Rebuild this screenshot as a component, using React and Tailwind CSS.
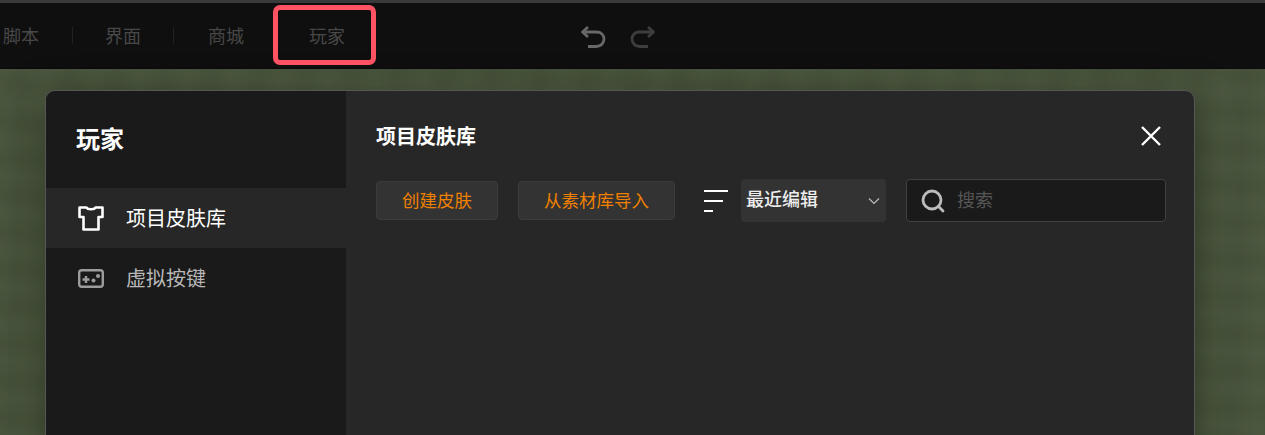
import React from "react";

const font = { fontFamily: '"Noto Sans CJK SC", "Liberation Sans", sans-serif' };

function Shirt() {
  return (
    <svg width="26" height="25" viewBox="0 0 26 25" fill="none" stroke="#ffffff" strokeWidth="2.6" strokeLinejoin="round" className="shrink-0">
      <path d="M1.5 1.5H8.5C9.5 3.8 16.5 3.8 17.5 1.5H24.5V11H20.5V23.5H5.5V11H1.5Z" />
    </svg>
  );
}

function Gamepad() {
  return (
    <svg width="26" height="19" viewBox="0 0 26 19" fill="none" className="shrink-0">
      <rect x="1.2" y="1.2" width="23.6" height="16.6" rx="2.5" stroke="#9c9c9c" strokeWidth="2.4" />
      <path d="M4.5 10.5H11.5M8 7V14" stroke="#9c9c9c" strokeWidth="2.4" />
      <circle cx="15.5" cy="11.5" r="2" fill="#9c9c9c" />
      <circle cx="20" cy="7" r="2" fill="#9c9c9c" />
    </svg>
  );
}

function Undo({ color, flip }) {
  return (
    <svg width="26" height="24" viewBox="0 0 26 24" fill="none" stroke={color} strokeWidth="2.8" className={flip ? "-scale-x-100" : ""}>
      <path d="M8 2L2.5 7L8 12" strokeLinejoin="round" />
      <path d="M3 7H16.5C21 7 24 10 24 14C24 18 21 21.5 16.5 21.5H8" />
    </svg>
  );
}

function NavItem({ label, selected }) {
  return (
    <div className="relative w-[102px] h-full flex items-center justify-center text-[18px] text-[#484848]">
      {label}
      {selected && (
        <div className="absolute -left-[3px] top-[2px] w-[103px] h-[60px] border-[5px] border-[#ff5364] rounded-[7px]" />
      )}
    </div>
  );
}

export default function App() {
  return (
    <div style={font} className="h-[435px] w-[1265px] overflow-hidden flex flex-col bg-[#46523a]">
      <div className="h-[3px] bg-[#3a3a3a] shrink-0" />
      <div className="h-[66px] shrink-0 bg-[#0f0f0f] border-b border-[#0a0a0a] flex items-center">
        <div className="flex items-center h-full -ml-[30px]">
          <NavItem label="脚本" />
          <div className="w-px h-[17px] bg-[#222222] -mr-px shrink-0" />
          <NavItem label="界面" />
          <div className="w-px h-[17px] bg-[#222222] -ml-px mr-px shrink-0" />
          <NavItem label="商城" />
          <div className="-ml-px h-full">
            <NavItem label="玩家" selected />
          </div>
        </div>
        <div className="flex items-center gap-[24px] ml-[202px] mt-[2px]">
          <Undo color="#686868" />
          <Undo color="#3e3e3e" flip />
        </div>
      </div>
      <div className="flex-1 min-h-0 pl-[45px] pr-[70px] pt-[21px] bg-[#47533b] bg-[repeating-linear-gradient(92deg,rgba(255,255,255,0.012)_0px,rgba(0,0,0,0.025)_22px,rgba(255,255,255,0.012)_47px),repeating-linear-gradient(3deg,rgba(255,255,255,0.014)_0px,rgba(0,0,0,0.02)_17px,rgba(255,255,255,0.014)_37px)]">
        <div className="h-[400px] rounded-[10px] border border-[#565656] overflow-hidden flex bg-[#272727] shadow-[0_12px_40px_rgba(25,35,15,0.55)]">
          <div className="w-[300px] shrink-0 bg-[#1a1a1a] flex flex-col">
            <div className="h-[97px] pl-[30px] pb-[4px] flex items-center text-[24px] font-bold text-white leading-none">玩家</div>
            <div className="h-[60px] bg-[#272727] pl-[32px] flex items-center gap-[22px] text-[20px] text-white">
              <Shirt />
              <span>项目皮肤库</span>
            </div>
            <div className="h-[60px] pl-[32px] flex items-center gap-[22px] text-[20px] text-[#b8b8b8]">
              <Gamepad />
              <span>虚拟按键</span>
            </div>
          </div>
          <div className="flex-1 min-w-0 pl-[30px] pr-[28px] pt-[30px]">
            <div className="flex items-center justify-between h-[30px]">
              <div className="text-[20px] font-bold text-white leading-none">项目皮肤库</div>
              <svg width="20" height="20" viewBox="0 0 20 20" stroke="#ffffff" strokeWidth="2.4" className="mr-[5px]">
                <path d="M1 1L19 19M19 1L1 19" />
              </svg>
            </div>
            <div className="flex items-center mt-[28px]">
              <button className="w-[122px] h-[39px] rounded-[4px] bg-[#333333] border border-[#3b3b3b] text-[17.5px] text-[#f08000] flex items-center justify-center">创建皮肤</button>
              <button className="w-[157px] h-[39px] ml-[20px] rounded-[4px] bg-[#333333] border border-[#3b3b3b] text-[17.5px] text-[#f08000] flex items-center justify-center">从素材库导入</button>
              <div className="ml-[29px] w-[24px] flex flex-col gap-[8px]">
                <div className="h-[2px] w-[24px] bg-white" />
                <div className="h-[2px] w-[19px] bg-white" />
                <div className="h-[2px] w-[9px] bg-white" />
              </div>
              <div className="ml-[13px] w-[145px] h-[43px] rounded-[4px] bg-[#333333] flex items-center justify-between pl-[5px] pr-[6px] text-[18px] font-medium text-[#eeeeee]">
                <span className="-mt-[4px]">最近编辑</span>
                <svg width="12" height="8" viewBox="0 0 12 8" fill="none" stroke="#bdbdbd" strokeWidth="1.2"><path d="M1 1.5L6 6.5L11 1.5" /></svg>
              </div>
              <div className="ml-[20px] w-[260px] h-[43px] rounded-[4px] bg-[#1a1a1a] border border-[#414141] flex items-center pl-[14px] gap-[12px] text-[18px] text-[#565656]">
                <svg width="24" height="24" viewBox="0 0 24 24" fill="none" stroke="#bcbcbc" strokeWidth="2.8" className="shrink-0">
                  <circle cx="11" cy="11" r="9" />
                  <path d="M17.5 17.5L22 22" strokeLinecap="round" />
                </svg>
                <span className="-mt-[2px]">搜索</span>
              </div>
            </div>
          </div>
        </div>
      </div>
    </div>
  );
}
